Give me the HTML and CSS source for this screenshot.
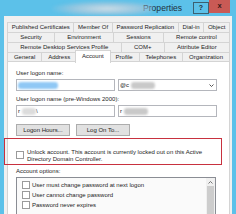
FILE: index.html
```html
<!DOCTYPE html>
<html>
<head>
<meta charset="utf-8">
<link rel="stylesheet" href="styles.css">
</head>
<body>
<div class="window">
  <div class="titlebar">
    <div class="title"><span class="smudge"></span><span class="title-text">Properties</span></div>
    <div class="btn-help">?</div>
    <div class="btn-close">x</div>
  </div>
  <div class="client">
    <div class="tabs">
      <div class="tabrow">
        <div class="tab">Published Certificates</div>
        <div class="tab">Member Of</div>
        <div class="tab">Password Replication</div>
        <div class="tab">Dial-in</div>
        <div class="tab">Object</div>
      </div>
      <div class="tabrow">
        <div class="tab">Security</div>
        <div class="tab">Environment</div>
        <div class="tab">Sessions</div>
        <div class="tab">Remote control</div>
      </div>
      <div class="tabrow">
        <div class="tab">Remote Desktop Services Profile</div>
        <div class="tab">COM+</div>
        <div class="tab">Attribute Editor</div>
      </div>
      <div class="tabrow last">
        <div class="tab">General</div>
        <div class="tab">Address</div>
        <div class="tab selected">Account</div>
        <div class="tab">Profile</div>
        <div class="tab">Telephones</div>
        <div class="tab">Organization</div>
      </div>
    </div>
    <div class="panel">
      <div class="label">User logon name:</div>
      <div class="fieldrow">
        <div class="field"><span class="blob blue"></span></div>
        <div class="field combo"><span class="ftext">@c</span><span class="blob gray"></span>
          <svg class="chev" width="5" height="3" viewBox="0 0 5 3"><path d="M0.5 0.5 L2.5 2.5 L4.5 0.5" fill="none" stroke="#444" stroke-width="0.9"/></svg>
        </div>
      </div>
      <div class="label l2">User logon name (pre-Windows 2000):</div>
      <div class="fieldrow">
        <div class="field"><span class="ftext">r</span><span class="blob gray small"></span><span class="ftext">\</span></div>
        <div class="field"><span class="ftext">r</span><span class="blob gray"></span></div>
      </div>
      <div class="buttons">
        <div class="button">Logon Hours...</div>
        <div class="button">Log On To...</div>
      </div>
      <div class="unlock">
        <span class="cb"></span>
        <div class="unlock-text">Unlock account. This account is currently locked out on this Active<br>Directory Domain Controller.</div>
      </div>
      <div class="label l3">Account options:</div>
      <div class="listbox">
        <div class="items">
          <div class="item"><span class="cb"></span>User must change password at next logon</div>
          <div class="item"><span class="cb"></span>User cannot change password</div>
          <div class="item"><span class="cb"></span>Password never expires</div>
        </div>
        <div class="scrollbar">
          <div class="sb-up"><svg width="5" height="3" viewBox="0 0 5 3"><path d="M0.5 2.5 L2.5 0.5 L4.5 2.5" fill="none" stroke="#555" stroke-width="0.8"/></svg></div>
          <div class="sb-thumb"></div>
        </div>
      </div>
    </div>
  </div>
</div>
</body>
</html>
```
FILE: styles.css
```css
html, body {
  margin: 0;
  padding: 0;
}
body {
  width: 236px;
  height: 214px;
  overflow: hidden;
  background: #5cc1e9;
  font-family: "Liberation Sans", Arial, sans-serif;
  font-size: 6px;
  color: #1c1c1c;
}
.window {
  display: flex;
  flex-direction: column;
  height: 214px;
}
.titlebar {
  height: 16px;
  display: flex;
  align-items: flex-start;
  flex: none;
}
.title {
  flex: 1;
  position: relative;
  height: 16px;
}
.title-text {
  position: absolute;
  left: 143px;
  top: 3px;
  font-size: 8.6px;
  color: #22303c;
}
.smudge {
  position: absolute;
  left: 52px;
  top: 1px;
  width: 100px;
  height: 14px;
  background: radial-gradient(ellipse at 55% 55%, rgba(210,222,230,0.95) 0%, rgba(170,200,220,0.7) 45%, rgba(92,193,233,0) 75%);
  filter: blur(1.5px);
  z-index: 2;
}
.btn-help {
  width: 14px;
  height: 10px;
  margin-top: 2px;
  border: 1px solid #3c6070;
  text-align: center;
  font-weight: bold;
  font-size: 7px;
  line-height: 10px;
  color: #1f2c3a;
}
.btn-close {
  width: 21px;
  height: 13px;
  margin-right: 6px;
  background: #c95a55;
  text-align: center;
  font-weight: bold;
  font-size: 7.5px;
  line-height: 12px;
  color: #3a1a18;
}
.client {
  flex: 1;
  margin: 0 4px;
  background: #f0f0f0;
  padding: 6px 2px 0 3px;
  display: flex;
  flex-direction: column;
}
.tabs {
  display: flex;
  flex-direction: column;
}
.tabrow {
  display: flex;
  height: 10px;
}
.tab {
  flex: 1 1 auto;
  border: 1px solid #d4d4d4;
  border-bottom: none;
  margin-left: -1px;
  text-align: center;
  line-height: 9px;
  white-space: nowrap;
  background: #f0f0f0;
}
.tab:first-child {
  margin-left: 0;
}
.tabrow.last {
  height: 9px;
  margin-top: 0;
}
.tab.selected {
  background: #ffffff;
  margin-top: -2px;
  height: 12px;
  line-height: 11px;
  position: relative;
  z-index: 1;
  margin-left: -2px;
  margin-right: -1px;
}
.panel {
  flex: 1;
  background: #ffffff;
  border: 1px solid #d4d4d4;
  border-bottom: none;
  padding: 8px 0 0 8px;
  display: flex;
  flex-direction: column;
}
.label {
  line-height: 7px;
  height: 7px;
}
.l2 {
  margin-top: 5px;
}
.l3 {
  margin-top: 5px;
}
.fieldrow {
  display: flex;
  gap: 3px;
  margin-top: 2px;
}
.field {
  width: 96px;
  height: 10px;
  border: 1px solid #b4b6bc;
  background: #fff;
  display: flex;
  align-items: center;
  padding-left: 1px;
  line-height: 10px;
}
.combo {
  position: relative;
}
.ftext {
  color: #222;
}
.blob {
  display: inline-block;
  height: 7px;
  filter: blur(1.2px);
  border-radius: 3px;
}
.blob.blue {
  width: 40px;
  background: #8fc8f5;
}
.blob.gray {
  width: 24px;
  margin-left: 2px;
  background: #c9c9c9;
}
.blob.gray.small {
  width: 14px;
  background: #dcdcdc;
}
.chev {
  margin-left: auto;
  margin-right: 2px;
}
.buttons {
  display: flex;
  gap: 6px;
  margin-top: 7px;
}
.button {
  width: 52px;
  height: 10px;
  border: 1px solid #adadad;
  background: #e1e1e1;
  text-align: center;
  line-height: 10px;
}
.unlock {
  position: relative;
  display: flex;
  align-items: flex-start;
  gap: 3px;
  margin-top: 13px;
}
.unlock::before {
  content: "";
  position: absolute;
  left: -12px;
  top: -11px;
  width: 216px;
  height: 25px;
  border: 1.3px solid #c8313f;
}
.unlock .cb {
  margin-top: 2px;
}
.unlock-text {
  line-height: 7px;
}
.cb {
  display: inline-block;
  width: 6px;
  height: 6px;
  border: 1px solid #9a9a9a;
  background: #fff;
  flex: none;
}
.listbox {
  margin-top: 2px;
  width: 198px;
  flex: 1;
  border: 1px solid #8a8d94;
  border-bottom: none;
  display: flex;
  background: #fafafa;
}
.items {
  flex: 1;
  padding: 2px 0 0 5px;
}
.item {
  display: flex;
  align-items: center;
  gap: 2px;
  height: 10px;
  line-height: 10px;
}
.scrollbar {
  width: 9px;
  background: #f0f0f0;
  display: flex;
  flex-direction: column;
}
.sb-up {
  height: 8px;
  display: flex;
  align-items: center;
  justify-content: center;
}
.sb-thumb {
  flex: 1;
  background: #cdcdcd;
  margin: 0 1px;
}
```
